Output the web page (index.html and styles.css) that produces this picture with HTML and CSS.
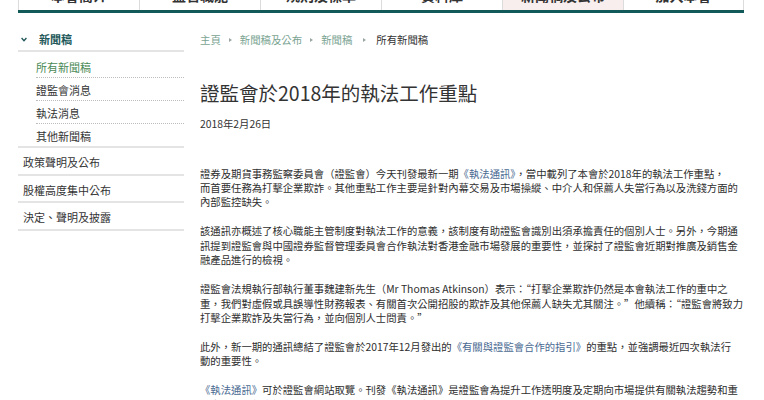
FILE: index.html
```html
<!DOCTYPE html>
<html lang="zh-Hant">
<head>
<meta charset="utf-8">
<title>證監會於2018年的執法工作重點</title>
<link rel="stylesheet" href="styles.css">
</head>
<body>
<div class="page">
  <nav class="topnav">
    <div class="nav-cell">本會簡介</div>
    <div class="nav-cell">監管職能</div>
    <div class="nav-cell">規則及標準</div>
    <div class="nav-cell">資料庫</div>
    <div class="nav-cell nav-active">新聞稿及公布</div>
    <div class="nav-cell">加入本會</div>
  </nav>
  <div class="columns">
    <aside class="sidebar">
      <div class="side-head">
        <svg class="chev" width="6" height="5" viewBox="0 0 6 5"><polyline points="0.6,1 3,3.6 5.4,1" fill="none" stroke="#22585a" stroke-width="1.4"/></svg>
        <span>新聞稿</span>
      </div>
      <ul class="sub-list">
        <li class="sub-item sub-active">所有新聞稿</li>
        <li class="sub-item">證監會消息</li>
        <li class="sub-item">執法消息</li>
        <li class="sub-item sub-last">其他新聞稿</li>
      </ul>
      <ul class="top-list">
        <li class="top-item">政策聲明及公布</li>
        <li class="top-item">股權高度集中公布</li>
        <li class="top-item">決定、聲明及披露</li>
      </ul>
    </aside>
    <main class="main">
      <div class="crumbs">
        <span class="crumb-link">主頁</span><i class="sep"></i><span class="crumb-link">新聞稿及公布</span><i class="sep"></i><span class="crumb-link">新聞稿</span><i class="sep sep-wide"></i><span class="crumb-cur">所有新聞稿</span>
      </div>
      <h1 class="title">證監會於2018年的執法工作重點</h1>
      <div class="date">2018年2月26日</div>
      <div class="article">
        <p>證券及期貨事務監察委員會（證監會）今天刊發最新一期<span class="ref">《執法通訊》</span>，當中載列了本會於2018年的執法工作重點，<br>而首要任務為打擊企業欺詐。其他重點工作主要是針對內幕交易及市場操縱、中介人和保薦人失當行為以及洗錢方面的<br>內部監控缺失。</p>
        <p>該通訊亦概述了核心職能主管制度對執法工作的意義，該制度有助證監會識別出須承擔責任的個別人士。另外，今期通<br>訊提到證監會與中國證券監督管理委員會合作執法對香港金融市場發展的重要性，並探討了證監會近期對推廣及銷售金<br>融產品進行的檢視。</p>
        <p>證監會法規執行部執行董事魏建新先生（Mr Thomas Atkinson）表示：“打擊企業欺詐仍然是本會執法工作的重中之<br>重，我們對虛假或具誤導性財務報表、有關首次公開招股的欺詐及其他保薦人缺失尤其關注。”他續稱：“證監會將致力<br>打擊企業欺詐及失當行為，並向個別人士問責。”</p>
        <p>此外，新一期的通訊總結了證監會於2017年12月發出的<span class="ref">《有關與證監會合作的指引》</span>的重點，並強調最近四次執法行<br>動的重要性。</p>
        <p><span class="ref">《執法通訊》</span>可於證監會網站取覽。刊發《執法通訊》是證監會為提升工作透明度及定期向市場提供有關執法趨勢和重<br>點事項的最新資訊的其中一項措施。如欲訂閱，請填妥本會網站上的訂閱表格。</p>
      </div>
    </main>
  </div>
</div>
</body>
</html>
```
FILE: styles.css
```css
* { box-sizing: border-box; }
html, body { margin: 0; padding: 0; background: #fff; }
body {
  font-family: "Noto Sans CJK TC", "Noto Sans", "Liberation Sans", sans-serif;
  color: #333;
  overflow: hidden;
}
.page {
  width: 764px;
  padding: 0 20px 0 18px;
}
.topnav {
  display: grid;
  grid-template-columns: repeat(6, 1fr);
  margin-top: -15px;
  border-bottom: 3px solid #12595a;
}
.nav-cell {
  height: 25px;
  line-height: 20px;
  text-align: center;
  font-size: 14px;
  font-weight: 700;
  color: #333;
  border-left: 1px solid #dcdcdc;
}
.nav-cell:last-child { border-right: 1px solid #dcdcdc; }
.nav-active { background: #f9eeee; }

.columns {
  display: flex;
  gap: 16px;
}
.sidebar {
  width: 166px;
  flex: none;
  padding-top: 15px;
  font-size: 11px;
}
.side-head {
  display: flex;
  align-items: center;
  height: 24px;
  border-bottom: 2px solid #e4e4e4;
  color: #22585a;
  font-weight: 700;
}
.chev { margin: 0 12px 0 3px; }
ul { list-style: none; margin: 0; padding: 0; }
.sub-list {
  padding-top: 3px;
  border-bottom: 2px solid #e4e4e4;
}
.sub-item {
  margin-left: 18px;
  height: 23px;
  padding-top: 3px;
  line-height: 19px;
  border-bottom: 1px dotted #bdbdbd;
  color: #333;
}
.sub-last { border-bottom: none; height: 22px; }
.sub-active { color: #4a8a56; }
.top-item {
  height: 27.5px;
  padding: 3px 0 0 5px;
  line-height: 22.5px;
  border-bottom: 2px solid #e4e4e4;
  color: #333;
}

.main {
  width: 544px;
  flex: none;
}
.crumbs {
  margin-top: 17px;
  height: 20px;
  line-height: 20px;
  font-size: 10.4px;
  display: flex;
  align-items: center;
}
.crumb-link { color: #79a391; }
.crumb-cur { color: #333; }
.sep {
  display: inline-block;
  width: 0;
  height: 0;
  border-left: 3px solid #9aa8a2;
  border-top: 2.5px solid transparent;
  border-bottom: 2.5px solid transparent;
  margin: 0 8px;
}
.sep-wide { margin: 0 10px 0 11px; }
.title {
  margin: 29px 0 0;
  font-size: 19.5px;
  font-weight: 400;
  line-height: 28px;
  color: #333;
}
.date {
  margin-top: 8.5px;
  font-size: 10.35px;
  line-height: 15px;
  color: #333;
}
.article {
  margin-top: 36px;
  font-size: 10.35px;
  line-height: 14.4px;
  color: #2e2e2e;
}
.article p {
  margin: 0 0 14.6px;
  white-space: nowrap;
}
.ref { color: #4a6a92; }
```
